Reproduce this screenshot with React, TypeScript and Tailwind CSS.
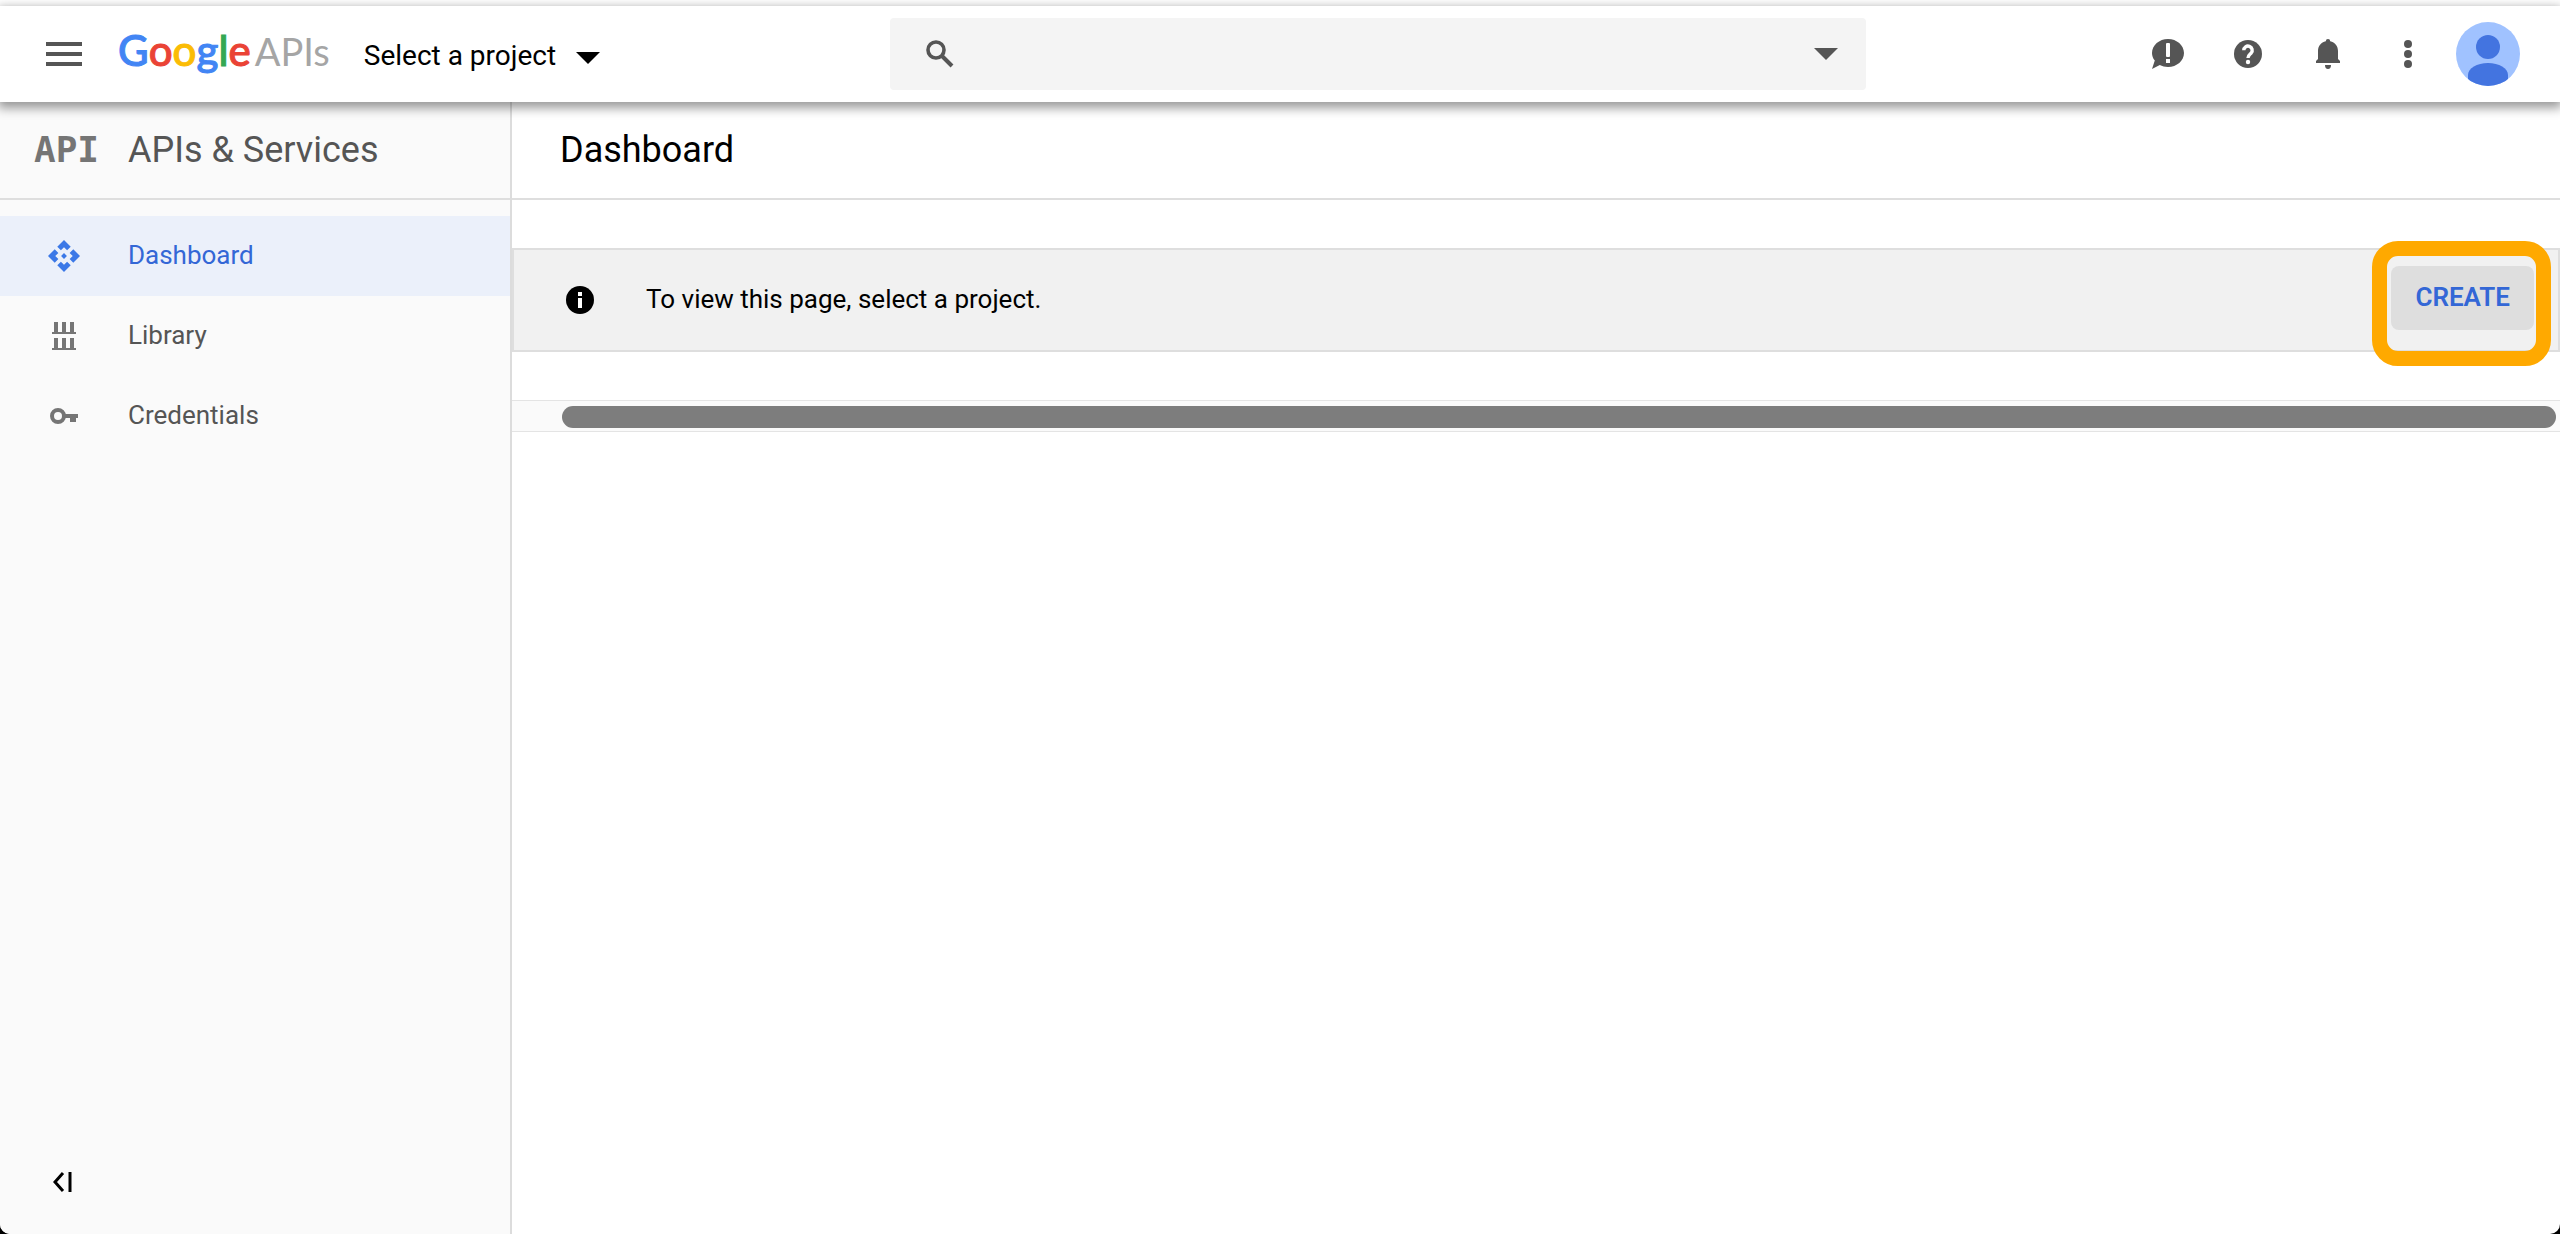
import React from 'react';

const MenuIcon = () => (
  <svg width="36" height="24" viewBox="0 0 36 24" fill="#555">
    <rect width="36" height="4" />
    <rect y="10" width="36" height="4" />
    <rect y="20" width="36" height="4" />
  </svg>
);

const CaretIcon = () => (
  <svg width="24" height="12" viewBox="0 0 24 12" fill="currentColor">
    <path d="M0 0h24L12 12z" />
  </svg>
);

const SearchIcon = () => (
  <svg width="28" height="28" viewBox="0 0 28 28" fill="none" stroke="#555">
    <circle cx="10" cy="10" r="8" strokeWidth="3.6" />
    <path d="M15.5 15.5 26 26" strokeWidth="4" />
  </svg>
);

const FeedbackIcon = () => (
  <svg width="32" height="30" viewBox="0 0 32 30">
    <path d="M16 0c8.8 0 16 6.3 16 14s-7.2 14-16 14c-3 0-5.8-.7-8.2-2L0 30l2.8-8.4C1 19.4 0 16.8 0 14 0 6.3 7.2 0 16 0z" fill="#555" />
    <rect x="14" y="4" width="4" height="14" rx="1" fill="#fff" />
    <rect x="14" y="20" width="4" height="4" fill="#fff" />
  </svg>
);

const HelpIcon = () => (
  <svg width="28" height="28" viewBox="0 0 28 28">
    <circle cx="14" cy="14" r="14" fill="#555" />
    <path d="M9.8 10.300a4.2 4.2 0 1 1 7.4 2.700c-1.7 1.7-3.2 2.3-3.2 5" fill="none" stroke="#fff" strokeWidth="3.4" />
    <circle cx="14" cy="22" r="2.2" fill="#fff" />
  </svg>
);

const BellIcon = () => (
  <svg width="24" height="30" viewBox="0 0 24 30" fill="#555">
    <path d="M12 0a2.2 2.2 0 0 1 2.2 2.2C19 3.2 22 7 22 12v8l2 2v2H0v-2l2-2v-8C2 7 5 3.2 9.8 2.2A2.2 2.2 0 0 1 12 0zM9 26h6a3 4 0 0 1-6 0z" />
  </svg>
);

const MoreIcon = () => (
  <svg width="8" height="28" viewBox="0 0 8 28" fill="#555">
    <circle cx="4" cy="4" r="4" />
    <circle cx="4" cy="14" r="4" />
    <circle cx="4" cy="24" r="4" />
  </svg>
);

const Avatar = () => (
  <svg width="64" height="64" viewBox="0 0 64 64">
    <clipPath id="avatar">
      <circle cx="32" cy="32" r="32" />
    </clipPath>
    <g clipPath="url(#avatar)">
      <rect width="64" height="64" fill="#a0c2ff" />
      <circle cx="32" cy="25" r="12" fill="#4374e0" />
      <path d="M12 64V53c0-7 9-12 20-12s20 5 20 12v11z" fill="#4374e0" />
    </g>
  </svg>
);

const DashboardIcon = () => (
  <svg width="32" height="32" viewBox="1 1 22 22" fill="#3b78e7">
    <path d="M14 12l-2 2-2-2 2-2 2 2zm-2-6l2.120 2.120 2.500-2.500L12 1 7.380 5.620l2.500 2.500L12 6zm-6 6l2.120-2.120-2.500-2.500L1 12l4.620 4.620 2.500-2.500L6 12zm12 0l-2.120 2.120 2.500 2.500L23 12l-4.620-4.620-2.500 2.500L18 12zm-6 6l-2.120-2.120-2.500 2.500L12 23l4.620-4.620-2.500-2.500L12 18z" transform="translate(0 0)" />
  </svg>
);

const LibraryIcon = () => (
  <svg width="24" height="28" viewBox="0 0 24 28" fill="#757575">
    <path d="M2 0h4v10h4V0h4v10h4V0h4v10h2v2H0v-2h2zM2 16h4v10h4V16h4v10h4V16h4v10h2v2H0v-2h2z" />
  </svg>
);

const KeyIcon = () => (
  <svg width="28" height="16" viewBox="0 0 28 16">
    <circle cx="8" cy="8" r="6" fill="none" stroke="#757575" strokeWidth="4" />
    <path d="M15 6h13v4h-2v4h-6v-4h-5z" fill="#757575" />
  </svg>
);

const InfoIcon = () => (
  <svg width="28" height="28" viewBox="0 0 28 28">
    <circle cx="14" cy="14" r="14" />
    <path d="M12 6h4v4h-4zM12 12h4v10h-4z" fill="#fff" />
  </svg>
);

const CollapseIcon = () => (
  <svg width="20" height="20" viewBox="0 0 20 20" fill="none" stroke="#000">
    <path d="M10 1 2 10l8 9" strokeWidth="3" />
    <path d="M17 0v20" strokeWidth="3" />
  </svg>
);

const navItems = [
  { label: 'Dashboard', icon: <DashboardIcon />, active: true },
  { label: 'Library', icon: <LibraryIcon />, active: false },
  { label: 'Credentials', icon: <KeyIcon />, active: false },
];

const Header = () => (
  <header className="relative z-10 mt-[6px] flex h-24 items-center bg-white shadow-[0_4px_10px_2px_rgba(0,0,0,0.4)]">
    <div className="flex w-[890px] items-center pl-[46px]">
      <button aria-label="Menu"><MenuIcon /></button>
      <a href="#" className="ml-9 flex items-baseline pb-2 font-['Lato'] text-[42px] leading-[48px] font-medium">
        <span className="flex [-webkit-text-stroke:1px_currentColor]">
          <span className="text-[#4285f4]">G</span>
          <span className="text-[#ea4335]">o</span>
          <span className="text-[#fbbc05]">o</span>
          <span className="text-[#4285f4]">g</span>
          <span className="text-[#34a853]">l</span>
          <span className="text-[#ea4335]">e</span>
        </span>
        <span className="ml-1 text-[38px] font-normal text-[#a5a5a5]">APIs</span>
      </a>
      <button className="ml-[34px] flex items-center gap-5 pt-1 text-[28px] leading-9">
        Select a project <span className="pt-1"><CaretIcon /></span>
      </button>
    </div>

    {/* Search */}
    <div className="flex h-18 max-w-[976px] flex-1 items-center rounded bg-[#f4f4f4] pr-7 pl-9 text-[#555]">
      <label htmlFor="search" aria-label="Search"><SearchIcon /></label>
      <input id="search" type="text" className="h-full min-w-0 flex-1 bg-transparent px-6 text-[26px] outline-none" />
      <button aria-label="Search options"><CaretIcon /></button>
    </div>

    {/* Account tools */}
    <div className="ml-auto flex items-center pr-8">
      <button aria-label="Send feedback" className="flex w-20 justify-center"><FeedbackIcon /></button>
      <button aria-label="Help" className="flex w-20 justify-center"><HelpIcon /></button>
      <button aria-label="Notifications" className="flex w-20 justify-center"><BellIcon /></button>
      <button aria-label="More" className="flex w-20 justify-center"><MoreIcon /></button>
      <button aria-label="Account" className="flex w-20 justify-center"><Avatar /></button>
    </div>
  </header>
);

const Sidebar = () => (
  <aside className="flex w-[512px] shrink-0 flex-col border-r-2 border-[#dcdcdc] bg-[#fafafa] text-[#555]">
    <div className="flex h-[98px] items-center border-b-2 border-[#dedede] text-[36px]">
      <span className="w-32 pl-[34px] font-['DejaVu_Sans_Mono'] leading-10 font-bold text-[#757575]">API</span>
      <h2>APIs &amp; Services</h2>
    </div>
    <nav className="pt-4">
      {navItems.map((item) => (
        <a
          key={item.label}
          href="#"
          className={`flex h-20 items-center text-[26px] ${item.active ? 'bg-[#ebf0fa] text-[#3367d6]' : ''}`}
        >
          <span className="flex w-32 justify-center">{item.icon}</span>
          <span className="pb-0.5">{item.label}</span>
        </a>
      ))}
    </nav>
    <button aria-label="Collapse menu" className="mt-auto mb-[42px] ml-[53px] self-start"><CollapseIcon /></button>
  </aside>
);

const App: React.FC = () => {
  return (
    <div className="bg-black font-['Roboto',sans-serif] text-black">
      <div className="flex min-h-screen flex-col overflow-hidden rounded-b-[10px] bg-white">
        <Header />
        <div className="flex flex-1">
          <Sidebar />
          <main className="min-w-0 flex-1">
            <div className="flex h-[98px] items-center border-b-2 border-[#dedede] pl-12">
              <h1 className="text-[36px]">Dashboard</h1>
            </div>

            {/* Notice */}
            <div className="mt-12 flex h-[104px] items-center border-2 border-[#dedede] bg-[#f1f1f1] pl-[52px] text-[26px]">
              <InfoIcon />
              <p className="ml-[52px] pb-0.5">To view this page, select a project.</p>
              <div className="relative mr-6 mb-1 ml-auto">
                <button className="h-16 rounded-lg bg-[#dedede] px-6 pb-0.5 font-semibold text-[#3367d6]">CREATE</button>
                <div className="pointer-events-none absolute -top-[25px] -right-[17px] -bottom-9 -left-[19px] rounded-[26px] border-[15px] border-[#ffa900]" />
              </div>
            </div>

            {/* Horizontal scroll bar */}
            <div className="mt-12 border-y border-[#e4e4e4] bg-[#fafafa] pt-[5px] pr-1 pb-[3px] pl-[50px]">
              <div className="h-[22px] rounded-full bg-[#7d7d7d]" />
            </div>
          </main>
        </div>
      </div>
    </div>
  );
};

export default App;
